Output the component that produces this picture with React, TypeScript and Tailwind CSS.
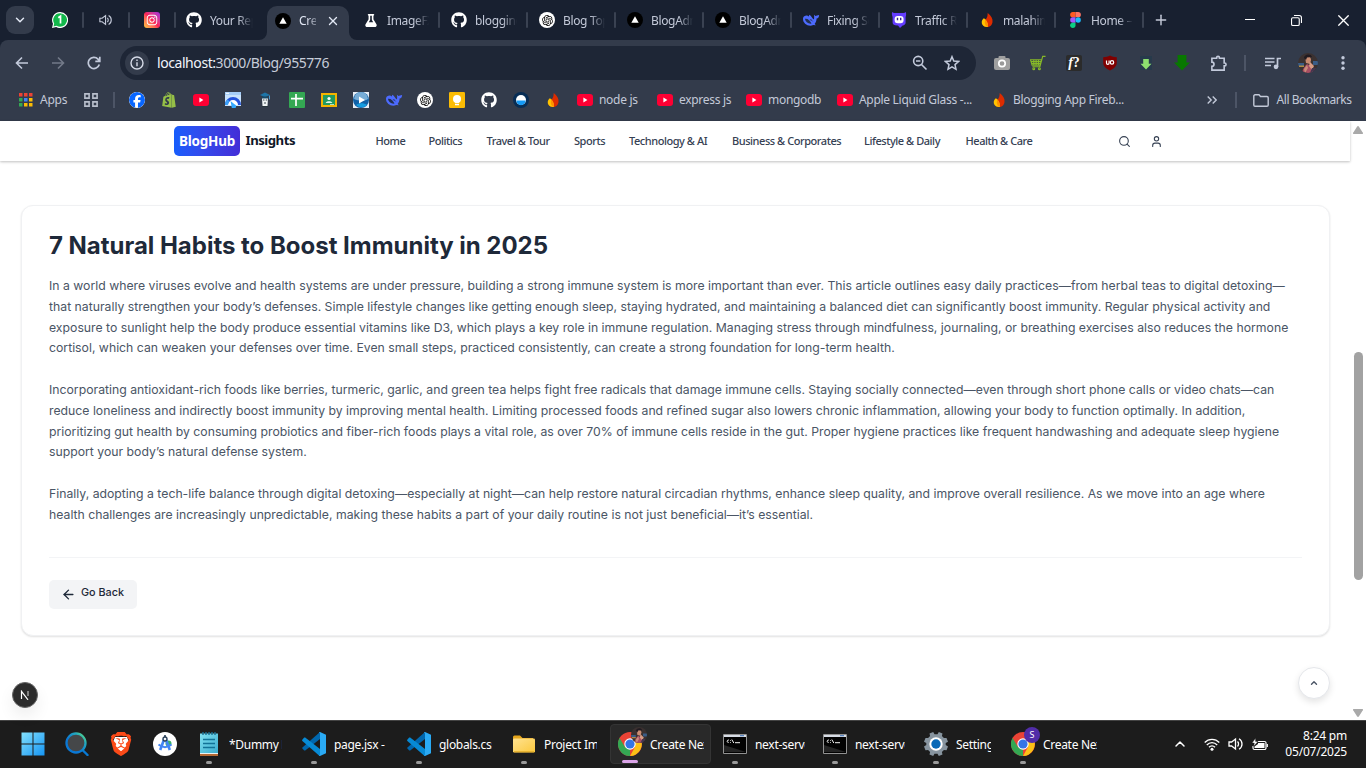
import React from 'react';
import { FaGithub, FaFlask, FaShopify, FaFacebook, FaInstagram } from 'react-icons/fa6';
import { RiOpenaiFill } from 'react-icons/ri';
import { SiBrave } from 'react-icons/si';
import { ArrowLeft, ChevronDown, ChevronUp, Search, User, X, Plus } from 'lucide-react';

type IconProps = { className?: string };

const WhatsApp = () => (
  <svg viewBox="0 0 16 16" className="size-4">
    <path d="M8 0a8 8 0 0 0-7 11.8L0 16l4.2-1A8 8 0 1 0 8 0Z" fill="#fff" />
    <path d="M8 1.2a6.8 6.8 0 0 0-5.8 10.3l-.7 2.9 3-.7A6.8 6.8 0 1 0 8 1.200Z" fill="#13b84b" />
    <path d="M6.300 5.800 8.500 4.200V11.600" fill="none" stroke="#fff" strokeWidth="1.700" />
  </svg>
);

const Sound = ({ className = 'size-3.5' }: IconProps) => (
  <svg viewBox="0 0 16 16" className={className} fill="none" stroke="currentColor" strokeWidth="1.300">
    <path d="M1 6v4h2.600L7.500 13V3L3.600 6Z" />
    <path d="M9.500 5.500a3.500 3.500 0 0 1 0 5M11 2.800a6 6 0 0 1 0 10.400" />
  </svg>
);

const Instagram = () => (
  <div className="flex size-4 items-center justify-center rounded-[3px] bg-linear-to-tr from-[#ffc83d] via-[#fb1f56] to-[#a01fe0] text-white">
    <FaInstagram className="size-3" />
  </div>
);

const Github = () => <FaGithub className="size-4 text-white" />;

const Vercel = () => (
  <svg viewBox="0 0 16 16" className="size-4">
    <circle cx="8" cy="8" r="8" fill="#000" />
    <path d="m8 4.200 3.700 6.600H4.300Z" fill="#fff" />
  </svg>
);

const OpenAI = () => (
  <div className="flex size-4 items-center justify-center rounded-full bg-white text-black">
    <RiOpenaiFill className="size-[13px]" />
  </div>
);

const Whale = () => (
  <svg viewBox="0 0 18 16" className="h-4 w-[18px]" fill="#4d6bfe">
    <path d="M1 6.500C1.300 4.200 3.500 3.300 5.600 3.700l1.200.9.400-1.800 1.500 1 1.100 1.500 1.500 2c1.500-.1.500-3.300.9-4.600l1.200 1.400c1.100-.7 2.100-.5 3.700-1.100.1 2-1 3.200-2.500 3.600-.1 2.200-.7 3.900-2 5.300l1.300 1.300-2.700-.1C6.700 15.200.7 11.700 1 6.500Z" />
    <path d="M3 6.700c3.200-.3 4.900 1.900 6.600 4.900-3.300.5-6.200-1.900-6.600-4.900Z" fill="#22304f" />
    <path d="M7.800 8c1-.7 2.100.2 2.800 1.300" stroke="#22304f" strokeWidth=".9" fill="none" />
  </svg>
);

const Devil = () => (
  <svg viewBox="0 0 16 16" className="size-4">
    <path d="M1.200 0c1 .9 1.600 1.200 3 1h7.600c1.400.2 2-.1 3-1 .6 2.200.3 3.900-.2 5v5.700c0 1.600-1.200 2.400-3 2.700L9 16l-2-2.400c-3.600.1-5.400-.8-5.400-3V5C1 3.500.6 1.800 1.200 0Z" fill="#633cff" />
    <rect x="3.600" y="4" width="9" height="7.200" rx="3.200" fill="#fff" />
    <path d="M6.500 5.700v2.500M9.700 5.700v2.500" stroke="#30228c" strokeWidth="1.400" />
  </svg>
);

const Flame = () => (
  <svg viewBox="0 0 16 16" className="size-4">
    <path d="M8.700 1C12 3.500 14 6.500 13.500 10c-.3 3-2.600 5-5.500 5-2.800 0-4-1.500-5-4 0-2 .6-3 1.800-4.300.9-1 1.100 1.200 1.700.8C8.300 6 8.600 3.700 8.700 1Z" fill="#dd2c00" />
    <path d="M4.800 6.300C2.600 8 2 11 3.600 13c1 1.500 3.200 2.300 5.400 1.900C9 10.500 7.300 7.700 4.800 6.300Z" fill="#ffc400" />
    <path d="M6.500 7.500c2 2 2.700 4.800 2.500 7.400C5.900 14 5 10.500 6.500 7.500Z" fill="#ff9100" />
  </svg>
);

const Figma = () => (
  <svg viewBox="0 0 12 18" className="h-4 w-[11px]">
    <path d="M6 0H3a3 3 0 0 0 0 6h3Z" fill="#ff5a24" />
    <path d="M6 0h3a3 3 0 0 1 0 6H6Z" fill="#ff7262" />
    <path d="M6 6H3a3 3 0 0 0 0 6h3Z" fill="#a259ff" />
    <circle cx="9" cy="9" r="3" fill="#1abcfe" />
    <path d="M6 12H3a3 3 0 1 0 3 3Z" fill="#0acf83" />
  </svg>
);

const YouTube = () => (
  <svg viewBox="0 0 16 12" className="h-3 w-4">
    <rect width="16" height="12" rx="3" fill="#ff0033" />
    <path d="m6.400 3.600 4 2.400-4 2.400Z" fill="#fff" />
  </svg>
);

const PageSpeed = () => (
  <svg viewBox="0 0 16 16" className="size-4">
    <path d="M0 0h16v14H0Z" fill="#c9e2fc" />
    <path d="M0 0h16v3H0Z" fill="#a5cdf8" />
    <path d="M1 1.300h3" stroke="#fff" />
    <path d="M1.500 13a6.500 6.500 0 0 1 13 0" fill="#fff" stroke="#2453db" strokeWidth="3" />
    <path d="M1.500 13a6.500 6.500 0 0 1 2-4.700" fill="none" stroke="#3ba0f8" strokeWidth="3" />
    <path d="m5.500 9 4 3.200a2.300 2.300 0 1 1-3 1.800Z" fill="#32a8ff" />
  </svg>
);

const Graduate = () => (
  <svg viewBox="0 0 16 16" className="size-4">
    <path d="m3 3 5-2.500L13 3 8 5.200Z" fill="#1d75a8" />
    <path d="M5 4.500h6V7H5Z" fill="#174866" />
    <path d="M5 6.500h6l-.5 7.500h-5Z" fill="#f0f4f5" />
    <path d="M6 8h1.500M8.700 8h1.500M7 11h2M5 14.500h6" stroke="#27343c" strokeWidth=".9" />
    <path d="M12.500 3.500v4" stroke="#4c9bd0" />
  </svg>
);

const Sheets = () => (
  <svg viewBox="0 0 16 16" className="size-4">
    <rect width="16" height="16" rx="1" fill="#34a853" />
    <path d="M2 6.600h12M7 2v12" stroke="#fff" strokeWidth="1.700" />
  </svg>
);

const Classroom = () => (
  <svg viewBox="0 0 16 16" className="size-4">
    <path d="M0 1h16v14H0Z" fill="#f4b400" />
    <path d="M2 3h12v10H2Z" fill="#219b61" />
    <circle cx="8" cy="6.500" r="1.600" fill="#fff" />
    <path d="M4.700 11c.4-2.400 6.200-2.400 6.600 0Z" fill="#e2f4e8" />
    <path d="M9 12.500h4" stroke="#b3e0c4" />
  </svg>
);

const Player = () => (
  <svg viewBox="0 0 16 16" className="size-4">
    <path d="M0 0h16v16H0Z" fill="#e7edf6" />
    <circle cx="8" cy="8" r="8" fill="#1261a7" />
    <path d="M1 7a7 7 0 0 1 14 0c-3 2-9 2-14 0Z" fill="#78add7" />
    <path d="M3 13c3-2.500 8-2.500 11 0-3 3-8 3-11 0Z" fill="#159ce0" />
    <path d="m6 4.500 6 3.500-6 3.500Z" fill="#fff" />
  </svg>
);

const Keep = () => (
  <svg viewBox="0 0 16 16" className="size-4">
    <rect width="16" height="16" rx="1.300" fill="#fbbc04" />
    <circle cx="8" cy="7" r="4" fill="#fff" />
    <path d="M6 8h4v2.700H6ZM6 11.800h4v1.500H6Z" fill="#fff" />
  </svg>
);

const WaterDrop = () => (
  <svg viewBox="0 0 16 16" className="size-4">
    <circle cx="8" cy="8" r="8" fill="#072d55" />
    <circle cx="8" cy="8" r="5" fill="#fff" />
    <path d="M3.300 8.500h9.400a4.700 4.700 0 0 1-9.400 0Z" fill="#159af5" />
  </svg>
);

const AppsGrid = () => {
  const colors = ['#ea4335', '#ea4335', '#ea4335', '#34a853', '#4285f4', '#fbbc04', '#34a853', '#fbbc04', '#fbbc04'];
  return (
    <svg viewBox="0 0 14 14" className="size-3.5">
      {colors.map((c, i) => (
        <rect key={i} x={(i % 3) * 5} y={Math.floor(i / 3) * 5} width="3.500" height="3.500" fill={c} />
      ))}
    </svg>
  );
};

const FourSquares = () => (
  <svg viewBox="0 0 14 14" className="size-3.5" fill="none" stroke="#b9bfcc" strokeWidth="1.600">
    <path d="M.9.900h4.200v4.200H.9ZM8.900.900h4.200v4.200H8.900ZM.9 8.900h4.200v4.200H.9ZM8.900 8.900h4.200v4.200H8.900Z" />
  </svg>
);

type Tab = { label: string; icon: React.ReactNode };

const tabs: Tab[] = [
  { label: 'ImageFX', icon: <FaFlask className="h-[13px] w-[14px] text-white" /> },
  { label: 'blogging', icon: <Github /> },
  { label: 'Blog Topic', icon: <OpenAI /> },
  { label: 'BlogAdmin', icon: <Vercel /> },
  { label: 'BlogAdmin', icon: <Vercel /> },
  { label: 'Fixing Sc', icon: <Whale /> },
  { label: 'Traffic Rep', icon: <Devil /> },
  { label: 'malahima', icon: <Flame /> },
  { label: 'Home – F', icon: <Figma /> },
];

const tabText =
  'overflow-hidden whitespace-nowrap pt-px text-[12px] tracking-[-0.35px] [mask-image:linear-gradient(to_right,#000_65%,transparent)]';

const TabStrip = () => (
  <div className="flex h-10 items-center bg-[#182030] text-[#c3c9d8]">
    <div className="ml-[6px] flex size-7 items-center justify-center rounded-[9px] bg-[#333b4b]">
      <ChevronDown className="size-3.5 text-[#e3e8f5]" strokeWidth={2.500} />
    </div>
    <div className="ml-[4px] flex">
      {[<WhatsApp key="w" />, <Sound key="s" />, <Instagram key="i" />].map((icon, i) => (
        <div key={i} className="flex w-[46px] items-center justify-end">
          <div className="flex w-[30px] items-center justify-center">{icon}</div>
          <div className="ml-[7px] h-4 w-[2px] rounded-full bg-[#3a4252]" />
        </div>
      ))}
    </div>
    <div className="flex w-[91px] items-center pl-[10px]">
      <Github />
      <div className={`ml-2 w-[43px] ${tabText}`}>Your Repo</div>
    </div>
    <div className="relative flex h-[34px] w-[82px] items-center self-end rounded-t-[10px] bg-[#333b4b] pb-[5px] pl-2">
      <svg viewBox="0 0 8 8" className="absolute bottom-0 -left-2 size-2" fill="#333b4b">
        <path d="M8 0v8H0a8 8 0 0 0 8-8Z" />
      </svg>
      <svg viewBox="0 0 8 8" className="absolute -right-2 bottom-0 size-2" fill="#333b4b">
        <path d="M0 0v8h8a8 8 0 0 1-8-8Z" />
      </svg>
      <Vercel />
      <div className="ml-2 w-[17px] overflow-hidden pt-px text-[12px] tracking-[-0.3px] whitespace-nowrap text-[#e3e8f5] [mask-image:linear-gradient(to_right,#000_40%,#0006)]">Create</div>
      <X className="ml-[10px] size-3.5 text-[#e3e8f5]" strokeWidth={2.300} />
    </div>
    <div className="ml-[3px] flex">
      {tabs.map((tab, i) => (
        <div key={i} className="flex w-[88px] items-center">
          <div className="ml-[10px] flex w-[18px] justify-center">{tab.icon}</div>
          <div className={`ml-[7px] w-[42px] ${tabText}`}>{tab.label}</div>
          <div className="ml-[9px] h-4 w-[2px] shrink-0 rounded-full bg-[#3a4252]" />
        </div>
      ))}
    </div>
    <Plus className="ml-[9px] size-4" strokeWidth={2.200} />
    <div className="mr-[17px] ml-auto flex items-center gap-9 text-white">
      <svg viewBox="0 0 10 10" className="size-[10px]" stroke="currentColor"><path d="M0 4.500h10" /></svg>
      <svg viewBox="0 0 10 10" className="size-[11px]" fill="none" stroke="currentColor">
        <rect x=".5" y="2.500" width="7" height="7" rx="1.200" />
        <path d="M2.700.5h4.800a2 2 0 0 1 2 2v4.800" />
      </svg>
      <svg viewBox="0 0 10 10" className="size-[11px]" stroke="currentColor" strokeWidth="1.200"><path d="m.3.3 9.400 9.400M9.700.3.3 9.700" /></svg>
    </div>
  </div>
);

const Extensions = () => (
  <>
    <svg viewBox="0 0 16 16" className="size-4">
      <rect y="3" width="16" height="12" rx="2" fill="#a0a0a0" />
      <rect x="4.500" y="1" width="7" height="4" rx="1" fill="#a0a0a0" />
      <circle cx="8" cy="8.500" r="3.200" fill="#9a9a9a" stroke="#fff" strokeWidth="1.700" />
    </svg>
    <svg viewBox="0 0 17 16" className="size-4" fill="none" stroke="#87b928" strokeWidth="1.200">
      <path d="M.5 4.500h11.800l-1.500 5.800H2.200ZM1 6.500h11M1.600 8.500h9.700M4 4.500v6M6.500 4.500v6M9 4.500v6M16.500 1h-3l-3 11H2.500" />
      <circle cx="4" cy="14" r="1" />
      <circle cx="10" cy="14" r="1" />
    </svg>
    <div className="flex size-4 items-center justify-center rounded-[2px] bg-[#2b2b2b] font-['Liberation_Serif',serif] text-[14px] leading-none font-bold text-white"><i>f</i>?</div>
    <svg viewBox="0 0 16 16" className="size-4">
      <path d="M8 .5c2 1.200 4 1.600 6.800 1.700v5.400c0 4-3 6-6.800 8-3.800-2-6.800-4-6.800-8V2.200C4 2.100 6 1.700 8 .5Z" fill="#800000" />
      <path d="M4.500 5.500V8a1.300 1.300 0 0 0 2.600 0V5.500" fill="none" stroke="#fff" strokeWidth="1.200" />
      <circle cx="10" cy="7.400" r="1.700" fill="none" stroke="#fff" strokeWidth="1.200" />
    </svg>
    <svg viewBox="0 0 16 16" className="size-4"><path d="M2 1h12v14H2Z" fill="#273a4b" /><path d="M5.200 4h5.600v4.700h2.700L8 14.500 2.500 8.700h2.700Z" fill="#8de06f" /></svg>
    <svg viewBox="0 0 16 16" className="size-4"><path d="M3.600 0h8.800v7.500H16L8 15.500l-8-8h3.600Z" fill="#087800" /></svg>
    <svg viewBox="0 0 18 18" className="size-[17px]" fill="none" stroke="#c3cadb" strokeWidth="1.700">
      <path d="M2 3.500h5V3a1.500 1.500 0 0 1 3 0v.5h5v5h.5a1.500 1.500 0 0 1 0 3H15V16H2v-4a2 2 0 0 0 0-4.500Z" />
    </svg>
  </>
);

const Avatar = ({ className = 'size-5' }: IconProps) => (
  <svg viewBox="0 0 20 20" className={className}>
    <defs><clipPath id="face"><circle cx="10" cy="10" r="10" /></clipPath></defs>
    <g clipPath="url(#face)">
      <path d="M0 0h20v20H0Z" fill="#3b3130" />
      <path d="M0 10h6v3H0ZM15 8h5v4h-5Z" fill="#395c86" />
      <path d="M1 12.500h5v1.500H1Z" fill="#b38b42" />
      <path d="M7 4c3-2 6 0 6 3l-1 4-4-1Z" fill="#c98c72" />
      <path d="M6 5c0-4 7-5 8-1l-5 .5L8 7Z" fill="#211b21" />
      <path d="M4 20c1-5 3-7 5-9l4 2 2 3v4Z" fill="#a84f63" />
      <path d="m12 9 4 4-2 4-3-4Z" fill="#da9c84" />
      <path d="m6 16 3-4 1 3-3 5Z" fill="#cc8d7a" />
      <path d="M14 15h4l-2 5h-4Z" fill="#46374f" />
    </g>
  </svg>
);

const Toolbar = () => (
  <div className="bg-[#182030]">
    <div className="flex h-[46px] items-center rounded-t-[8px] bg-[#333b4b] text-[#c3cadb]">
      <svg viewBox="0 0 14 14" className="ml-[15px] size-[14px]" fill="none" stroke="currentColor" strokeWidth="1.600"><path d="M13 7H2M7 1.500 1.500 7 7 12.500" /></svg>
      <svg viewBox="0 0 14 14" className="ml-[22px] size-[14px] text-[#737a89]" fill="none" stroke="currentColor" strokeWidth="1.600"><path d="M1 7h11M7 1.500 12.500 7 7 12.500" /></svg>
      <svg viewBox="0 0 14 14" className="ml-[22px] size-[14px]" fill="none" stroke="currentColor" strokeWidth="1.700"><path d="M12.300 8.500A5.600 5.600 0 1 1 11 3.100L12.500 5M12.800.8v4.500H8.300" /></svg>
      <div className="ml-[19px] flex h-[34px] w-[856px] items-center rounded-full bg-[#1e2636] pl-[5px]">
        <div className="flex size-6 items-center justify-center rounded-full bg-[#333b4b]">
          <svg viewBox="0 0 14 14" className="size-[14px]" fill="none" stroke="#d6dbe8" strokeWidth="1.400"><circle cx="7" cy="7" r="6" /><path d="M7 6.200v4M7 3.500V5" /></svg>
        </div>
        <div className="ml-2 pb-px text-[14px] tracking-[-0.43px] text-[#c6ccd9]"><span className="text-[#f1f4fb]">localhost:</span>3000/Blog/955776</div>
        <svg viewBox="0 0 16 16" className="ml-auto size-4" fill="none" stroke="currentColor" strokeWidth="1.600"><circle cx="6.200" cy="6" r="4.600" /><path d="m9.500 9.500 5 5M4 6h4.400" /></svg>
        <svg viewBox="0 0 16 16" className="mr-4 ml-4 size-4" fill="none" stroke="currentColor" strokeWidth="1.500"><path d="m8 1.700 1.800 4.400 4.700.4L11 9.600l1 4.700-4-2.500-4 2.500 1-4.700L1.500 6.500l4.700-.4Z" /></svg>
      </div>
      <div className="ml-[18px] flex items-center gap-5"><Extensions /></div>
      <div className="ml-[17px] h-4 w-[2px] bg-[#4d5566]" />
      <svg viewBox="0 0 16 14" className="ml-[19px] h-[14px] w-4" fill="none" stroke="currentColor" strokeWidth="1.700"><path d="M0 2.500h9.500M0 6h9.500M0 9.500h6M12.500 11V2.500H16" /><circle cx="11" cy="10.800" r="1.500" fill="currentColor" /></svg>
      <Avatar className="ml-[17px] size-5" />
      <svg viewBox="0 0 4 14" className="ml-[23px] h-[14px] w-1" fill="currentColor"><circle cx="2" cy="1.800" r="1.700" /><circle cx="2" cy="7" r="1.700" /><circle cx="2" cy="12.200" r="1.700" /></svg>
    </div>
  </div>
);

const quickLinks: React.ReactNode[] = [
  <FaFacebook className="size-4 rounded-full bg-white text-[#0866ff]" />,
  <FaShopify className="size-4 text-[#95bf47]" />,
  <YouTube />, <PageSpeed />, <Graduate />, <Sheets />, <Classroom />, <Player />, <Whale />, <OpenAI />, <Keep />, <Github />, <WaterDrop />, <Flame />,
];

const namedLinks: { label: string; width: string; icon: React.ReactNode }[] = [
  { label: 'node js', width: 'w-20', icon: <YouTube /> },
  { label: 'express js', width: 'w-[89px]', icon: <YouTube /> },
  { label: 'mongodb', width: 'w-[91px]', icon: <YouTube /> },
  { label: 'Apple Liquid Glass -...', width: 'w-[154px]', icon: <YouTube /> },
  { label: 'Blogging App Fireb...', width: 'w-[140px]', icon: <Flame /> },
];

const Bookmarks = () => (
  <div className="flex h-[35px] items-center bg-[#333b4b] pb-[7px] text-[12px] whitespace-nowrap text-[#c3c9d8]">
    <div className="ml-[19px]"><AppsGrid /></div>
    <div className="ml-[7px] w-11 tracking-[-0.25px]">Apps</div>
    <FourSquares />
    <div className="ml-[15px] h-4 w-[2px] bg-[#4d5566]" />
    <div className="ml-[14px] flex">
      {quickLinks.map((icon, i) => (
        <div key={i} className="flex h-4 w-8 items-center">{icon}</div>
      ))}
    </div>
    {namedLinks.map((link) => (
      <div key={link.label} className={`flex shrink-0 items-center gap-[6px] tracking-[-0.3px] ${link.width}`}>
        {link.icon}
        <span>{link.label}</span>
      </div>
    ))}
    <svg viewBox="0 0 10 8" className="mr-[18px] ml-auto h-2 w-[10px]" fill="none" stroke="currentColor" strokeWidth="1.400"><path d="m.7.5 3.500 3.500L.7 7.500M5.700.5l3.500 3.500-3.500 3.500" /></svg>
    <div className="h-4 w-[2px] bg-[#4d5566]" />
    <svg viewBox="0 0 16 13" className="mr-2 ml-4 h-[13px] w-4" fill="none" stroke="currentColor" strokeWidth="1.400"><path d="M.8 11V2A1.200 1.200 0 0 1 2 .8h4l1.500 1.700H14a1.200 1.200 0 0 1 1.200 1.200V11a1.200 1.200 0 0 1-1.200 1.200H2A1.200 1.200 0 0 1 .8 11Z" /></svg>
    <span className="mr-[14.500px] tracking-[-0.45px]">All Bookmarks</span>
  </div>
);

const navItems = [
  { label: 'Home', width: 'w-[53px]' },
  { label: 'Politics', width: 'w-[58px]' },
  { label: 'Travel & Tour', width: 'w-[87.500px]' },
  { label: 'Sports', width: 'w-[55px]' },
  { label: 'Technology & AI', width: 'w-[103px]' },
  { label: 'Business & Corporates', width: 'w-[132px]' },
  { label: 'Lifestyle & Daily', width: 'w-[101.500px]' },
  { label: 'Health & Care', width: 'w-[152.500px]' },
];

const SiteHeader = () => (
  <header className="flex h-10 items-center bg-white shadow-[0_1px_3px_rgba(0,0,0,0.16),0_1px_2px_rgba(0,0,0,0.1)]">
    <div className="ml-[174px] flex w-[201.500px] items-center text-[13.500px] font-bold">
      <div className="flex h-[30px] w-[66px] items-center justify-center rounded-[5px] bg-linear-to-r from-[#155dfc] to-[#432dd7] tracking-[-0.2px] text-white">BlogHub</div>
      <span className="ml-[5.500px] text-[13.200px] tracking-[-0.5px] text-[#101828]">Insights</span>
    </div>
    <nav className="flex text-[11px] font-medium tracking-[-0.45px] whitespace-nowrap text-[#364153]">
      {navItems.map((item) => <a key={item.label} className={item.width}>{item.label}</a>)}
    </nav>
    <Search className="size-[13px] text-[#364153]" strokeWidth={2} />
    <User className="ml-[19px] size-[13px] text-[#364153]" strokeWidth={2} />
  </header>
);

const paragraphs = [
  'In a world where viruses evolve and health systems are under pressure, building a strong immune system is more important than ever. This article outlines easy daily practices—from herbal teas to digital detoxing—that naturally strengthen your body’s defenses. Simple lifestyle changes like getting enough sleep, staying hydrated, and maintaining a balanced diet can significantly boost immunity. Regular physical activity and exposure to sunlight help the body produce essential vitamins like D3, which plays a key role in immune regulation. Managing stress through mindfulness, journaling, or breathing exercises also reduces the hormone cortisol, which can weaken your defenses over time. Even small steps, practiced consistently, can create a strong foundation for long-term health.',
  'Incorporating antioxidant-rich foods like berries, turmeric, garlic, and green tea helps fight free radicals that damage immune cells. Staying socially connected—even through short phone calls or video chats—can reduce loneliness and indirectly boost immunity by improving mental health. Limiting processed foods and refined sugar also lowers chronic inflammation, allowing your body to function optimally. In addition, prioritizing gut health by consuming probiotics and fiber-rich foods plays a vital role, as over 70% of immune cells reside in the gut. Proper hygiene practices like frequent handwashing and adequate sleep hygiene support your body’s natural defense system.',
  'Finally, adopting a tech-life balance through digital detoxing—especially at night—can help restore natural circadian rhythms, enhance sleep quality, and improve overall resilience. As we move into an age where health challenges are increasingly unpredictable, making these habits a part of your daily routine is not just beneficial—it’s essential.',
];

const Page = () => (
  <div className="relative flex h-[599px] bg-white">
    <div className="w-[1350px]">
      <SiteHeader />
      <article className="mt-[44px] ml-[21px] h-[431px] w-[1309px] rounded-[12px] border border-[#f0f1f3] bg-white px-[27px] pt-[24px] font-['Inter',sans-serif] shadow-[0_1px_2px_rgba(0,0,0,0.12)]">
        <h1 className="text-[24px] leading-8 font-bold tracking-[-0.02px] text-[#1e2939]">7 Natural Habits to Boost Immunity in 2025</h1>
        <div className="mt-[14px] flex flex-col gap-[20.800px] text-[12.250px] leading-[20.800px] text-[#4a5565]">
          {paragraphs.map((p, i) => <p key={i}>{p}</p>)}
        </div>
        <div className="mt-[31px] border-t border-[#f3f4f6] pt-[22px]">
          <button className="flex h-[29px] w-[88px] items-center rounded-[5px] bg-[#f3f4f6] pl-[12px] text-[10.800px] font-medium text-[#1e2939]">
            <ArrowLeft className="mt-[1px] size-[15px]" strokeWidth={2.200} />
            <span className="ml-[5px] pb-[2px] whitespace-nowrap">Go Back</span>
          </button>
        </div>
      </article>
    </div>
    <div className="flex w-4 flex-col items-center pt-[5px] pb-[3px]">
      <svg viewBox="0 0 10 8" className="h-2 w-[10px]" fill="#a9a9a9"><path d="M4 .8a1.200 1.200 0 0 1 2 0l3.500 5.400A1 1 0 0 1 8.600 8H1.400A1 1 0 0 1 .5 6.200Z" /></svg>
      <div className="mt-[218px] h-[228px] w-[9px] rounded-full bg-[#a2a2a2]" />
      <svg viewBox="0 0 10 8" className="mt-auto h-2 w-[10px]" fill="#a9a9a9"><path d="M4 7.200a1.200 1.200 0 0 0 2 0l3.500-5.400A1 1 0 0 0 8.600 0H1.400A1 1 0 0 0 .5 1.800Z" /></svg>
    </div>
    <div className="absolute top-[561px] left-[12px] flex size-[26px] items-center justify-center rounded-full border border-[#666] bg-[#2c2c2c] shadow-[0_8px_16px_rgba(0,0,0,0.07)]">
      <svg viewBox="0 0 10 10" className="size-[10px]" fill="none" stroke="#fff" strokeWidth="1.200"><path d="M1.500 9V1.300L8 9.800" /><path d="M8 1v5" stroke="#bbb" /></svg>
    </div>
    <div className="absolute top-[546px] left-[1298px] flex size-8 items-center justify-center rounded-full border border-[#e5e7eb] bg-white shadow-[0_3px_7px_rgba(0,0,0,0.11)]">
      <ChevronUp className="size-[10px] text-[#4a5565]" strokeWidth={3.300} />
    </div>
  </div>
);

const WindowsLogo = () => (
  <svg viewBox="0 0 24 24" className="size-6">
    <defs><linearGradient id="win" x2="1" y2="1"><stop stopColor="#83e0fc" /><stop offset="1" stopColor="#1595f4" /></linearGradient></defs>
    <path d="M.5.5h11v11H.5ZM12.500.5h11v11h-11ZM.5 12.500h11v11H.5ZM12.500 12.500h11v11h-11Z" fill="url(#win)" />
  </svg>
);

const TaskSearch = () => (
  <svg viewBox="0 0 24 24" className="size-6" fill="none" strokeLinecap="round">
    <defs><linearGradient id="lens" x1="0" y1="1" x2="1" y2="0"><stop offset=".4" stopColor="#0a78d5" /><stop offset=".75" stopColor="#25a9bb" /><stop offset="1" stopColor="#65e878" /></linearGradient></defs>
    <path d="m17.500 18 5 5" stroke="#0879d4" strokeWidth="2.400" />
    <circle cx="11" cy="11" r="9.500" fill="#454749" stroke="url(#lens)" strokeWidth="2.300" />
  </svg>
);

const Brave = () => (
  <div className="relative flex size-6 items-center justify-center">
    <svg viewBox="0 0 24 24" className="absolute size-6" fill="#fff"><path d="M6 5h12l2 5-3 9-5 3-5-3-3-9Z" /></svg>
    <SiBrave className="relative size-6 text-[#fb4a18]" />
  </div>
);

const AndroidStudio = () => (
  <svg viewBox="0 0 24 24" className="size-6" fill="none">
    <circle cx="12" cy="12" r="12" fill="#fff" />
    <circle cx="15.500" cy="11.500" r="3" fill="#39b16a" />
    <path d="m11.200 7-4 11M12.800 7l4 11" stroke="#4285f4" strokeWidth="2.600" />
    <path d="M5.500 12.500c4 3.300 9 3.300 13 0" stroke="#4285f4" strokeWidth="2" />
    <circle cx="12" cy="7" r="2" fill="#f2f5fa" stroke="#263d55" strokeWidth="1.300" />
    <path d="M12 3v2" stroke="#263d55" strokeWidth="1.600" />
  </svg>
);

const Notepad = () => (
  <svg viewBox="0 0 20 24" className="h-6 w-5">
    <defs><linearGradient id="note" x2="1" y2="1"><stop stopColor="#80e0f0" /><stop offset="1" stopColor="#3cadcf" /></linearGradient></defs>
    <path d="M1 21h18v3H1Z" fill="#b56a35" />
    <path d="M1 19h18v3H1Z" fill="#e9f2f3" />
    <path d="M1 1.500h18v19.500H1Z" fill="url(#note)" />
    <path d="M4 0v3M7 0v3M10 0v3M13 0v3M16 0v3" stroke="#176f93" strokeWidth="1.400" />
    <path d="M4 7.500h12M4 11.500h12M4 15.500h12" stroke="#137397" strokeWidth="1.600" />
  </svg>
);

const VSCode = () => (
  <svg viewBox="0 0 24 24" className="size-6">
    <path d="M18 0 1 15l-1 1 2.200 2.500 1-.1L18 7Z" fill="#0067ae" />
    <path d="M.1 8 2.200 5.500l1 .1L18 17v7L17 23.500.1 8.800Z" fill="#078ad5" />
    <path d="m18 0 6 2.700v18.600L18 24l-1.200-.7 1.200-.6V1.300l-1.200-.7Z" fill="#2aaaf4" />
  </svg>
);

const Folder = () => (
  <svg viewBox="0 0 22 18" className="h-[18px] w-[22px]">
    <defs><linearGradient id="fold" x2="1" y2="1"><stop stopColor="#ffe290" /><stop offset="1" stopColor="#fbc83d" /></linearGradient></defs>
    <path d="M0 2A1.500 1.500 0 0 1 1.500.5H7L9.500 3H20v4H0Z" fill="#e5a51b" />
    <rect y="3.500" width="22" height="14" rx="1.300" fill="url(#fold)" />
    <path d="M1 16.800h20" stroke="#dfa722" />
  </svg>
);

const Chrome = ({ badge }: { badge: React.ReactNode }) => (
  <div className="relative size-6">
    <svg viewBox="0 0 24 24" className="size-6">
      <circle cx="12" cy="12" r="12" fill="#ea4335" />
      <path d="M1.600 6 6.900 15 12 17.500 12 24A12 12 0 0 1 1.600 6Z" fill="#34a853" />
      <path d="M22.400 6.300A12 12 0 0 1 12 24l5-9-.5-8.700Z" fill="#fbc116" />
      <circle cx="12" cy="12" r="5.700" fill="#fff" />
      <circle cx="12" cy="12" r="4.600" fill="#3475e6" />
    </svg>
    <div className="absolute -top-[5px] left-[13px] size-4">{badge}</div>
  </div>
);

const Terminal = () => (
  <svg viewBox="0 0 24 20" className="h-5 w-6">
    <path d="M.5.500h23v19H.5Z" fill="#020202" stroke="#929292" />
    <path d="M1 1h22v2H1Z" fill="#d7dce5" />
    <path d="M17 1.700h4" stroke="#3b72bd" />
    <path d="M6 6.200c-2-1-2.700 2.700-.3 2.200M7.500 6v.7M7.500 8v.7M8.800 5.500l2 3.500M12 8.700h5" stroke="#f1f1f1" fill="none" />
    <path d="M1 18h22L1 11Z" fill="#252525" />
  </svg>
);

const Settings = () => (
  <svg viewBox="0 0 24 24" className="size-6">
    <path d="m9.200 0 1.300 2.200h3L14.800 0l3.700 1.600-.6 2.500 2 2 2.600-.1 1.500 3.800-2.300 1.300v2l2.300 1.400-1.500 3.800-2.600-.2-2 2 .6 2.400-3.700 1.500-1.300-2.200h-3L9.200 24l-3.700-1.500.6-2.400-2-2-2.600.2L0 14.500l2.300-1.400v-2L0 9.800 1.500 6l2.600.1 2-2-.6-2.500Z" fill="#87949f" />
    <circle cx="12" cy="12" r="6.700" fill="#fff" />
    <circle cx="12" cy="12" r="4.700" fill="#0868b7" />
  </svg>
);

type TaskItem = { label: string; width: string; textWidth: string; icon: React.ReactNode; active?: boolean };

const tasks: TaskItem[] = [
  { label: '*Dummy Data', width: 'w-[105px]', textWidth: 'w-[53px]', icon: <Notepad /> },
  { label: 'page.jsx - blog', width: 'w-[105px]', textWidth: 'w-[52px]', icon: <VSCode /> },
  { label: 'globals.css', width: 'w-[105px]', textWidth: 'w-[53px]', icon: <VSCode /> },
  { label: 'Project Images', width: 'w-[104px]', textWidth: 'w-[53px]', icon: <Folder /> },
  { label: 'Create Next', width: 'w-[101px]', textWidth: 'w-[54px]', icon: <Chrome badge={<Avatar className="size-4" />} />, active: true },
  { label: 'next-server', width: 'w-[100px]', textWidth: 'w-[50px]', icon: <Terminal /> },
  { label: 'next-server', width: 'w-[101px]', textWidth: 'w-[50px]', icon: <Terminal /> },
  { label: 'Settings', width: 'w-[87px]', textWidth: 'w-[35px]', icon: <Settings /> },
  {
    label: 'Create Next', width: 'w-[105px]', textWidth: 'w-[54px]',
    icon: <Chrome badge={<div className="flex size-4 items-center justify-center rounded-full bg-[#512da8] text-[9px] text-white">S</div>} />,
  },
];

const Taskbar = () => (
  <div className="flex h-12 items-center border-t border-[#444] bg-[#1c1c1c] pb-px text-[12px] text-white">
    <div className="ml-[21px] flex w-[176px] gap-5"><WindowsLogo /><TaskSearch /><Brave /><AndroidStudio /></div>
    {tasks.map((task, i) => (
      <div key={i} className={`relative h-10 shrink-0 ${task.width} ${task.active ? '-ml-[6px] mr-3 rounded-[4px] border border-[#343434] bg-[#292929]' : ''}`}>
        <div className={`flex h-full items-center ${task.active ? 'pl-[7px]' : ''}`}>
          <div className="flex w-6 justify-center">{task.icon}</div>
          <div className={`ml-2 overflow-hidden pt-px tracking-[-0.3px] whitespace-nowrap ${task.textWidth}`}>{task.label}</div>
        </div>
        <div className={task.active ? 'absolute bottom-0 left-[11px] h-[3px] w-4 rounded-full bg-[#dba4e8]' : 'absolute bottom-0 left-[9px] h-[3px] w-[6px] rounded-full bg-[#999]'} />
      </div>
    ))}
    <div className="ml-auto flex items-center">
      <ChevronUp className="size-4" strokeWidth={2.200} />
      <svg viewBox="0 0 16 13" className="ml-4 h-[13px] w-4" fill="none" stroke="currentColor" strokeWidth="1.300"><path d="M.7 4.500C4.700.2 11.300.2 15.300 4.500M2.800 7c2.900-3.100 7.500-3.100 10.400 0M5 9.300c1.700-1.800 4.300-1.800 6 0" /><circle cx="8" cy="11.300" r="1.500" fill="currentColor" stroke="none" /></svg>
      <Sound className="ml-2 size-4" />
      <svg viewBox="0 0 16 13" className="ml-2 h-[13px] w-4" fill="none" stroke="currentColor" strokeWidth="1.200"><path d="M6 3.500h6.500a1.500 1.500 0 0 1 1.500 1.500v5a1.500 1.500 0 0 1-1.500 1.500h-10A1.500 1.500 0 0 1 1 10V8" /><path d="M6 5h6.500v5h-10V8.500L6 6Z" fill="currentColor" stroke="none" /><path d="M3.500.3 0 5h2.300L1.700 8.300 6 3.500H3.600Z" fill="currentColor" stroke="#1c1c1c" strokeWidth=".4" /><path d="M15.300 6v3" /></svg>
      <div className="mr-[19px] w-[79px] text-right leading-4 tracking-[-0.22px]">8:24 pm<br />05/07/2025</div>
    </div>
  </div>
);

export default function App() {
  return (
    <div className="h-[768px] w-[1366px] overflow-hidden font-['Noto_Sans','Open_Sans',sans-serif]">
      <TabStrip />
      <Toolbar />
      <Bookmarks />
      <Page />
      <Taskbar />
    </div>
  );
}
